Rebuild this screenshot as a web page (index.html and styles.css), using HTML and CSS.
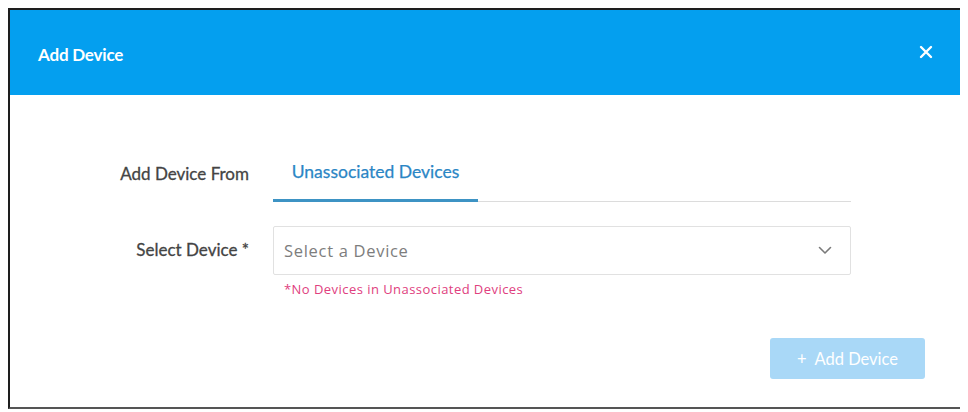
FILE: index.html
```html
<!DOCTYPE html>
<html>
<head>
<meta charset="utf-8">
<link rel="stylesheet" href="styles.css">
</head>
<body>
<div class="dialog">
  <div class="header">
    <div class="title">Add Device</div>
    <svg class="close" width="14" height="14" viewBox="0 0 14 14"><path d="M2 2L12 12M12 2L2 12" stroke="#fff" stroke-width="2.4" stroke-linecap="round" fill="none"/></svg>
  </div>
  <div class="body">
    <div class="row tab-row">
      <div class="label">Add Device From</div>
      <div class="tabs">
        <div class="tab active">Unassociated Devices</div>
      </div>
    </div>
    <div class="row select-row">
      <div class="label">Select Device *</div>
      <div class="field">
        <div class="select">
          <span class="placeholder">Select a Device</span>
          <svg class="chev" width="14" height="9" viewBox="0 0 14 9"><path d="M1.5 1.5L7 7L12.5 1.5" stroke="#7a7a7a" stroke-width="1.6" fill="none" stroke-linecap="round" stroke-linejoin="round"/></svg>
        </div>
        <div class="error">*No Devices in Unassociated Devices</div>
      </div>
    </div>
    <div class="actions">
      <button class="btn">+&nbsp; Add Device</button>
    </div>
  </div>
</div>
</body>
</html>
```
FILE: styles.css
```css
body {
  margin: 8px;
  background: #fff;
  font-family: Lato, "Open Sans", sans-serif;
}
.dialog {
  width: 957px;
  height: 401px;
  box-sizing: border-box;
  border: 2px solid #1e1e1e;
  border-right-color: #555;
  border-bottom-color: #555;
  background: #fff;
}
.header {
  height: 85px;
  background: #049fef;
  display: flex;
  align-items: center;
  justify-content: space-between;
  padding: 4px 30px 0 28px;
  box-sizing: border-box;
}
.title {
  color: #fff;
  font-weight: 700;
  font-size: 17px;
  letter-spacing: -0.2px;
}
.close {
  margin-top: -6px;
}
.body {
  padding-top: 53px;
}
.row {
  display: grid;
  grid-template-columns: 239px 578px;
  column-gap: 24px;
}
.label {
  text-align: right;
  font-size: 17px;
  color: #444;
  -webkit-text-stroke: 0.3px #444;
  align-self: center;
}
.tab-row .label {
  margin-top: -4px;
}
.tabs {
  border-bottom: 1px solid #dcdcdc;
  display: flex;
}
.tab {
  width: 205px;
  height: 54px;
  display: flex;
  align-items: center;
  justify-content: center;
  font-size: 17.5px;
  color: #2b86c5;
  -webkit-text-stroke: 0.25px #2b86c5;
  box-sizing: border-box;
  padding-bottom: 4px;
}
.tab.active {
  border-bottom: 3px solid #3d93c4;
  margin-bottom: -1px;
}
.select-row {
  margin-top: 24px;
}
.select-row .label {
  align-self: start;
  margin-top: 13px;
}
.select {
  height: 49px;
  box-sizing: border-box;
  border: 1px solid #e1e1e1;
  border-radius: 2px;
  display: flex;
  align-items: center;
  justify-content: space-between;
  padding: 0 18px 0 10px;
}
.placeholder {
  font-family: "Open Sans", sans-serif;
  font-size: 16.5px;
  letter-spacing: 0.7px;
  color: #7d7d7d;
}
.error {
  font-family: "Open Sans", sans-serif;
  font-size: 13px;
  letter-spacing: 0.45px;
  color: #e0407e;
  padding-left: 11px;
  margin-top: 6px;
  line-height: 16px;
}
.actions {
  display: flex;
  justify-content: flex-end;
  padding-right: 38px;
  margin-top: 41px;
}
.btn {
  width: 155px;
  height: 41px;
  background: #a9d8f7;
  border: none;
  border-radius: 3px;
  color: #fff;
  font-family: Lato, sans-serif;
  font-size: 16.5px;
}
```
